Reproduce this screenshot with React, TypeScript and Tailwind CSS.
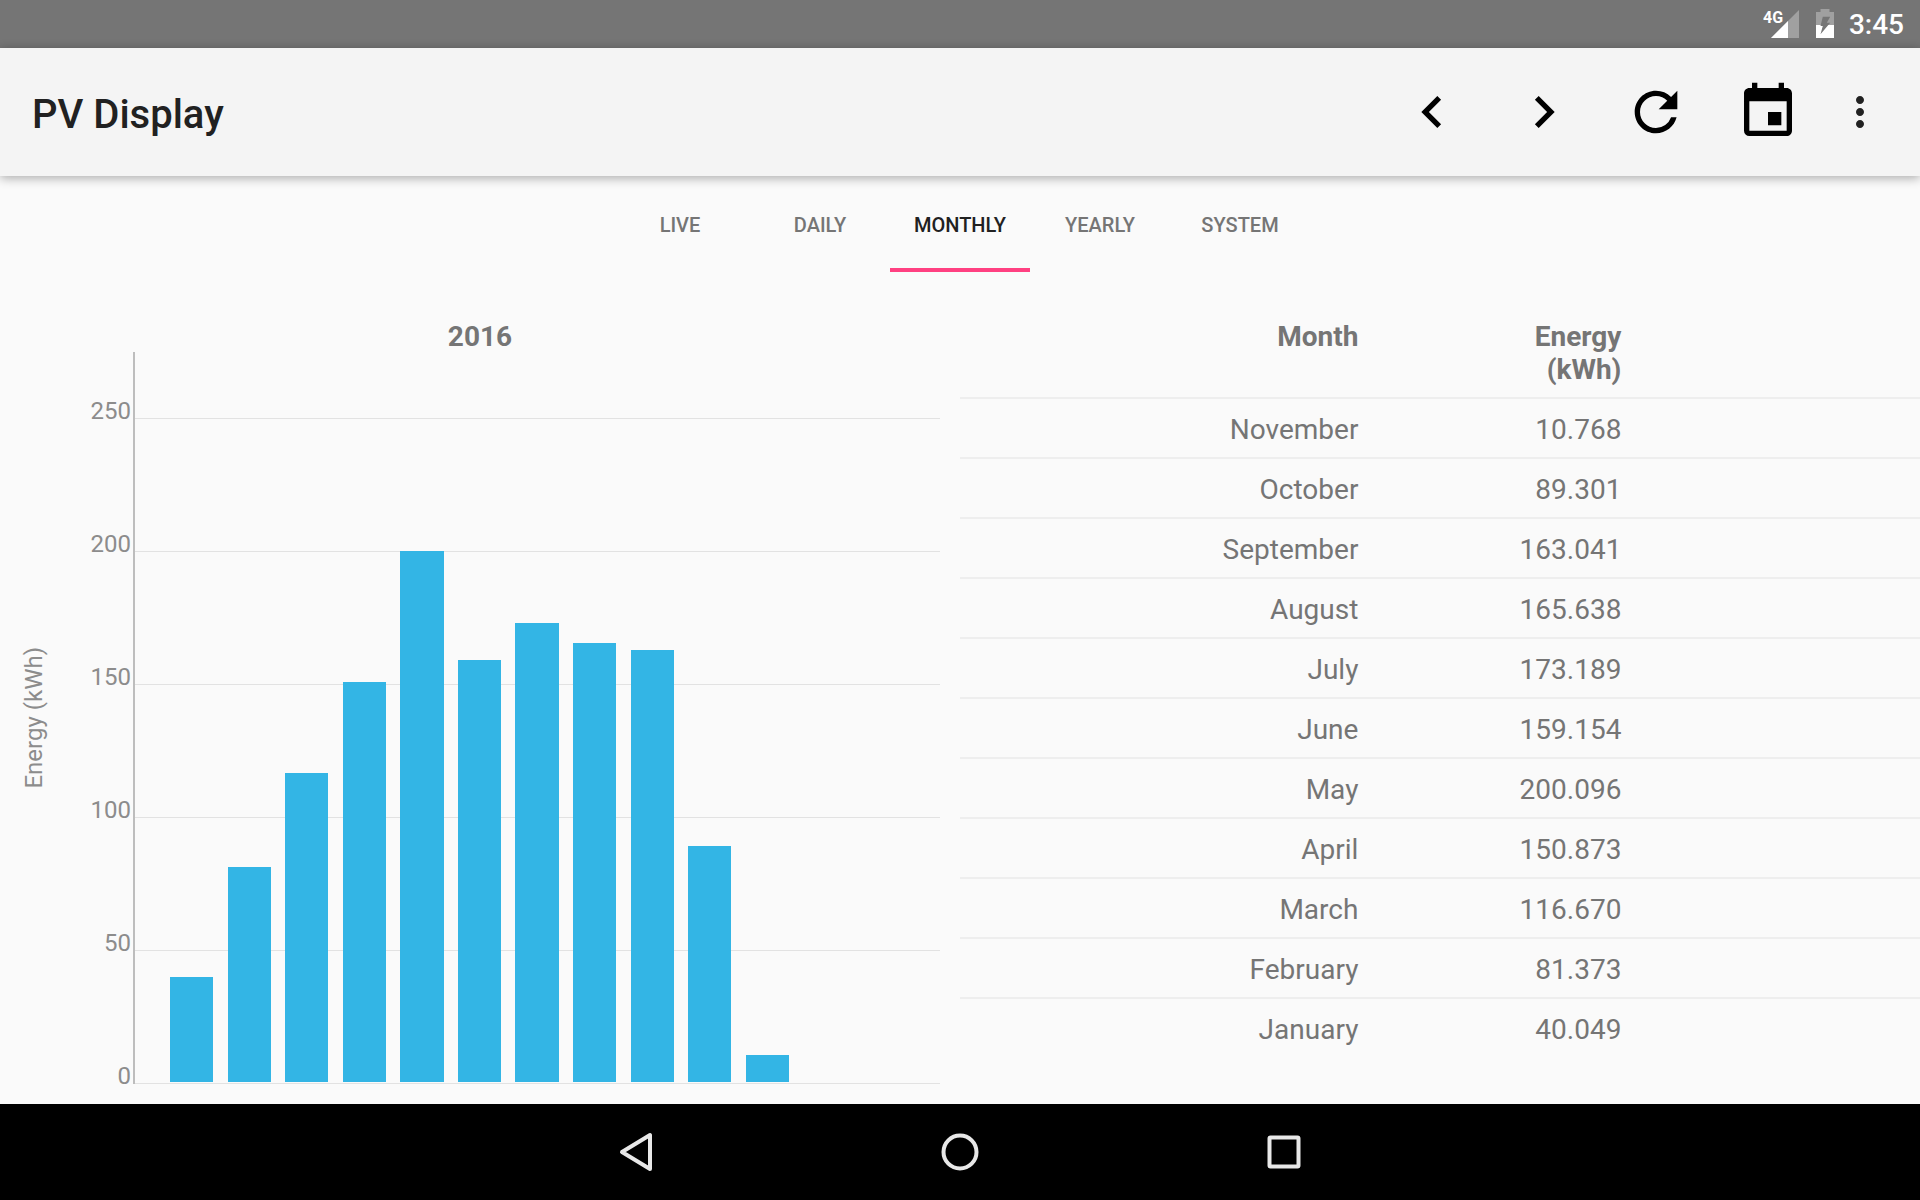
import { MdChevronLeft, MdChevronRight, MdEvent, MdMoreVert, MdRefresh } from "react-icons/md";

const TABS = ["Live", "Daily", "Monthly", "Yearly", "System"];
const ACTIVE_TAB = "Monthly";

const MONTHS = [
  { name: "January", energy: 40.049 },
  { name: "February", energy: 81.373 },
  { name: "March", energy: 116.67 },
  { name: "April", energy: 150.873 },
  { name: "May", energy: 200.096 },
  { name: "June", energy: 159.154 },
  { name: "July", energy: 173.189 },
  { name: "August", energy: 165.638 },
  { name: "September", energy: 163.041 },
  { name: "October", energy: 89.301 },
  { name: "November", energy: 10.768 },
];

const TICKS = [250, 200, 150, 100, 50, 0];
const AXIS_MAX = 275;

function StatusBar() {
  return (
    <div className="flex h-12 items-center justify-end bg-[#757575] pr-4 text-white">
      <svg className="mr-4 h-8 w-9" viewBox="0 0 36 32" aria-label="4G signal">
        <path d="M36 2V30H8Z" fill="#a0a0a0" />
        <path d="M25 13V30H8Z" fill="#ffffff" />
        <text x="0" y="15" fontSize="16" fontWeight="700" fill="#ffffff">
          4G
        </text>
      </svg>
      <svg className="mr-[14px] h-8 w-5" viewBox="0 0 20 32" aria-label="Battery charging">
        <path d="M5.5 1h9v3H19v13H1V4h4.500z" fill="#a0a0a0" />
        <path d="M1 17h18v13H1z" fill="#ffffff" />
        <path d="M7.800 8.700H15.200L11.800 14.700H15.200L5.500 26.300L7.800 18H5.500Z" fill="#757575" />
      </svg>
      <span className="pt-0.5 text-[28px] leading-8 font-medium">3:45</span>
    </div>
  );
}

function Toolbar() {
  return (
    <header className="z-10 flex h-32 items-center bg-[#f4f4f4] pr-6 pl-8 shadow-[0_2px_10px_rgba(0,0,0,0.33)]">
      <h1 className="flex-1 pt-1.5 text-[40px] leading-none font-medium text-[#212121]">PV Display</h1>
      <button type="button" aria-label="Previous" className="flex w-28 justify-center text-black">
        <MdChevronLeft className="size-16" />
      </button>
      <button type="button" aria-label="Next" className="flex w-28 justify-center text-black">
        <MdChevronRight className="size-16" />
      </button>
      <button type="button" aria-label="Refresh" className="flex w-28 justify-center text-black">
        <MdRefresh className="size-16" />
      </button>
      <button type="button" aria-label="Pick date" className="flex w-28 justify-center text-black">
        <MdEvent className="size-16" />
      </button>
      <button type="button" aria-label="More options" className="flex w-[72px] justify-center text-[#212121]">
        <MdMoreVert className="size-12" />
      </button>
    </header>
  );
}

function TabBar() {
  return (
    <nav role="tablist" className="flex h-24 justify-center">
      {TABS.map((tab) => (
        <button
          key={tab}
          type="button"
          role="tab"
          aria-selected={tab === ACTIVE_TAB}
          className={
            tab === ACTIVE_TAB
              ? "w-[140px] border-y-4 border-t-transparent border-b-[#ff4081] pt-0.5 text-xl font-medium text-[#212121] uppercase"
              : "w-[140px] pt-0.5 text-xl font-medium text-[#757575] uppercase"
          }
        >
          {tab}
        </button>
      ))}
    </nav>
  );
}

function Chart() {
  return (
    <section className="flex w-1/2 flex-col pr-5 pb-5">
      <h2 className="h-8 pl-5 text-center text-[28px] leading-[34px] font-bold text-[#757575]">2016</h2>
      <div className="flex flex-1 text-2xl text-[#8c8c8c]">
        <div className="flex w-[68px] items-center justify-center">
          <span className="rotate-180 leading-7 [writing-mode:vertical-rl]">Energy (kWh)</span>
        </div>
        <div className="flex w-[65px] flex-col pr-0.5">
          {TICKS.map((tick) => (
            <div
              key={tick}
              className={tick === 250 ? "flex flex-1 items-end justify-end" : "flex flex-2 items-end justify-end"}
            >
              <span className="leading-4">{tick}</span>
            </div>
          ))}
        </div>
        <div className="grid flex-1 border-l-2 border-[#bdbdbd]">
          <div className="col-start-1 row-start-1 flex flex-col">
            {TICKS.map((tick) => (
              <div
                key={tick}
                className={tick === 250 ? "flex-1 border-b border-[#e2e2e2]" : "flex-2 border-b border-[#e2e2e2]"}
              />
            ))}
          </div>
          <div className="col-start-1 row-start-1 grid grid-cols-12 pr-[79px] pl-[35px]">
            {MONTHS.map((month) => (
              <div key={month.name} className="flex items-end">
                <div
                  className="w-3/4 border-b-2 border-transparent bg-[#33b5e5] bg-clip-padding"
                  style={{ height: `${(month.energy / AXIS_MAX) * 100}%` }}
                />
              </div>
            ))}
          </div>
        </div>
      </div>
    </section>
  );
}

function EnergyTable() {
  return (
    <section className="-mt-[14px] w-1/2">
      <table className="w-full table-fixed border-collapse text-right text-[28px] leading-[33px] text-[#757575]">
        <colgroup>
          <col className="w-[41.5%]" />
          <col className="w-[27.4%]" />
          <col />
        </colgroup>
        <thead>
          <tr className="border-b-2 border-[#eeeeee] align-top">
            <th className="pt-[14px] pb-[11px] font-bold">Month</th>
            <th className="pt-[14px] pb-[11px] font-bold">
              Energy
              <br />
              (kWh)
            </th>
            <td />
          </tr>
        </thead>
        <tbody>
          {[...MONTHS].reverse().map((month) => (
            <tr key={month.name} className="border-b-2 border-[#eeeeee] last:border-b-0">
              <td className="pt-[14px] pb-[11px]">{month.name}</td>
              <td className="pt-[14px] pb-[11px]">{month.energy.toFixed(3)}</td>
              <td />
            </tr>
          ))}
        </tbody>
      </table>
    </section>
  );
}

function NavigationBar() {
  return (
    <nav className="flex h-24 justify-center bg-black">
      <button type="button" aria-label="Back" className="flex w-[324px] items-center justify-center">
        <svg className="size-12" viewBox="0 0 48 48" fill="none" stroke="#e8e8e8" strokeWidth="4" strokeLinejoin="round">
          <path d="M38 7V41L10 24Z" />
        </svg>
      </button>
      <button type="button" aria-label="Home" className="flex w-[324px] items-center justify-center">
        <svg className="size-12" viewBox="0 0 48 48" fill="none" stroke="#e8e8e8" strokeWidth="4">
          <circle cx="24" cy="24" r="16.5" />
        </svg>
      </button>
      <button type="button" aria-label="Recent apps" className="flex w-[324px] items-center justify-center">
        <svg className="size-12" viewBox="0 0 48 48" fill="none" stroke="#e8e8e8" strokeWidth="4">
          <rect x="9.5" y="9.5" width="29" height="29" rx="1" />
        </svg>
      </button>
    </nav>
  );
}

export default function App() {
  return (
    <div className="flex min-h-screen flex-col bg-[#fafafa] font-[Roboto,sans-serif]">
      <StatusBar />
      <Toolbar />
      <TabBar />
      <main className="flex flex-1 pt-12">
        <Chart />
        <EnergyTable />
      </main>
      <NavigationBar />
    </div>
  );
}
